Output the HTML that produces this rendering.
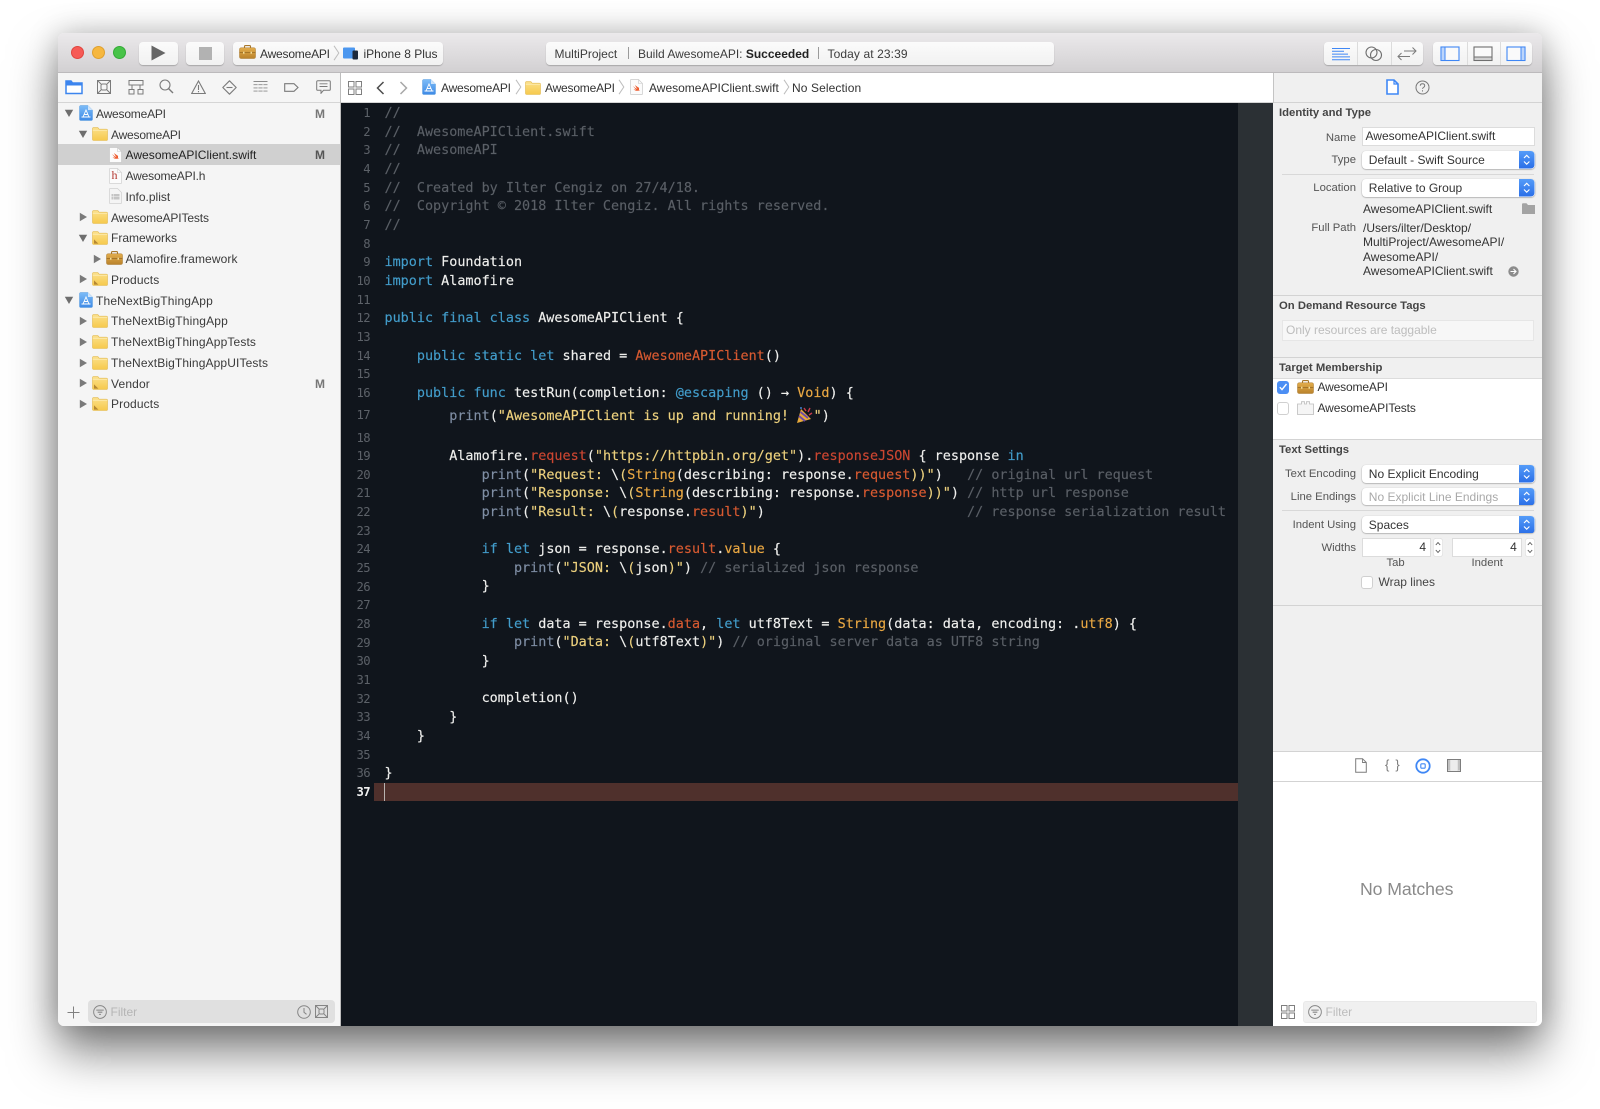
<!DOCTYPE html>
<html><head><meta charset="utf-8"><title>Xcode</title>
<style>
*{box-sizing:border-box;margin:0;padding:0}
html,body{width:1600px;height:1109px;overflow:hidden;background:#fff}
body{position:relative;font-family:"Liberation Sans",sans-serif;font-size:12px;color:#333}
.a{position:absolute}
.t{position:absolute;white-space:pre;line-height:16px;height:16px}
#shadow{position:absolute;left:58px;top:33px;width:1484px;height:993px;border-radius:6px;box-shadow:0 26px 48px rgba(0,0,0,.5),0 0 30px rgba(0,0,0,.22)}
#win{position:absolute;left:0;top:0;width:1600px;height:1109px;clip-path:inset(33px 58px 83px 58px round 6px);filter:blur(.3px)}
.btn{position:absolute;top:42px;height:23px;background:linear-gradient(#fbfbfb,#f1f1f1);border-radius:4px;box-shadow:0 1px 1px rgba(0,0,0,.22)}
.row{position:absolute;left:58px;width:282px;height:20.76px}
.row .tx{position:absolute;top:2.9px;line-height:16px;white-space:pre;color:#3a3a3a;font-size:12px}
.row svg{position:absolute}
.row .m{position:absolute;left:257px;top:2.9px;line-height:16px;font-weight:bold;color:#777;font-size:12px}
.hd{position:absolute;left:1279px;font-weight:bold;color:#444;font-size:11.3px;line-height:15px;white-space:pre}
.lab{position:absolute;right:244px;color:#555;font-size:11.3px;line-height:15px;white-space:pre}
.val{position:absolute;color:#333;font-size:12px;line-height:14px;white-space:pre}
.pop{position:absolute;left:1362px;width:172.5px;height:17.5px;background:#fff;border-radius:4px;box-shadow:0 .5px 1.5px rgba(0,0,0,.4);font-size:12px;line-height:18px;color:#333;padding-left:6.8px;white-space:pre}
.pop svg{position:absolute;right:0;top:0}
.fld{position:absolute;background:#fff;border:1px solid #dcdcdc;font-size:12px;line-height:17px;white-space:pre;color:#333}
.sep{position:absolute;left:1273px;width:269px;height:1px;background:#d3d3d3}
.dv{position:absolute;left:1282px;width:252px;height:1px;background:#d8d8d8}
#code{position:absolute;left:0;top:104.97px;width:1238px;font-family:"DejaVu Sans Mono","Liberation Mono",monospace;font-size:13.45px;color:#efefed;-webkit-text-stroke:.15px currentColor}
.l{position:relative;height:18.67px;line-height:18.67px;padding-left:384.5px;white-space:pre}
.l b{position:absolute;left:340px;width:30px;text-align:right;font-weight:normal;color:#5c6168;font-size:12.2px;font-family:"DejaVu Sans Mono",monospace;letter-spacing:-.6px;top:-.8px;-webkit-text-stroke:0}
.c{color:#5a5f66}.k{color:#429dcb}.s{color:#ecd07d}.p{color:#7f8ea4}.r{color:#cc4631}.o{color:#d85a31}.y{color:#eaa843}
</style></head><body>
<svg width="0" height="0" style="position:absolute">
<defs>
<linearGradient id="fg" x1="0" y1="0" x2="0" y2="1"><stop offset="0" stop-color="#fbe08a"/><stop offset="1" stop-color="#f6c94c"/></linearGradient>
<linearGradient id="tb" x1="0" y1="0" x2="0" y2="1"><stop offset="0" stop-color="#e3ad4b"/><stop offset="1" stop-color="#b9822b"/></linearGradient>
<linearGradient id="pj" x1="0" y1="0" x2="0" y2="1"><stop offset="0" stop-color="#7cbcf7"/><stop offset="1" stop-color="#3e8ae6"/></linearGradient>
<linearGradient id="bs" x1="0" y1="0" x2="0" y2="1"><stop offset="0" stop-color="#559cf8"/><stop offset="1" stop-color="#2b6fe7"/></linearGradient>
<symbol id="folder" viewBox="0 0 16 14"><path d="M.5 12.4V1.7C.5 1 1 .6 1.6.6h3.700c.5 0 .8.2 1.100.6l.7 1h7.300c.6 0 1.100.5 1.100 1.100v9.100c0 .6-.5 1.100-1.100 1.100H1.600c-.6 0-1.100-.5-1.100-1.100z" fill="url(#fg)" stroke="#e2b94f" stroke-width=".6"/><path d="M.8 3.2h14.400" stroke="#fdf0bd" stroke-width=".8"/></symbol>
<symbol id="folderm" viewBox="0 0 16 14"><use href="#folder" width="16" height="14"/><path d="M2 12.600V8.400l4.400 4.200z" fill="#b48733"/></symbol>
<symbol id="tool" viewBox="0 0 17 14"><path d="M5.500 3V1.500C5.500 1 6 .6 6.500.6h4c.5 0 1 .4 1 .9V3" fill="none" stroke="#a8772a" stroke-width="1.100"/><rect x=".5" y="2.800" width="16" height="10.700" rx="1.500" fill="url(#tb)" stroke="#a8772a" stroke-width=".5"/><path d="M.5 7.500h16" stroke="#9b6c22" stroke-width=".8"/><rect x="4" y="6.700" width="1.500" height="2" fill="#f3dd9a"/><rect x="11.500" y="6.700" width="1.500" height="2" fill="#f3dd9a"/></symbol>
<symbol id="proj" viewBox="0 0 14 16"><path d="M.5 1.500C.5 1 1 .5 1.500.5H9L13.500 5v9.500c0 .5-.5 1-1 1h-11c-.5 0-1-.5-1-1z" fill="url(#pj)" stroke="#5d9ee0" stroke-width=".5"/><path d="M9 .5V5h4.500z" fill="#cfe5fb"/><path d="M4 12 7 5l3 7M2.500 12h9M5 9.500h4" stroke="#fff" stroke-width=".9" fill="none"/></symbol>
<symbol id="swift" viewBox="0 0 13 16"><path d="M.5 1C.5.700.7.500 1 .5h7.500L12.500 4.500V15c0 .3-.2.5-.5.5H1c-.3 0-.5-.2-.5-.5z" fill="#fbfbfb" stroke="#c9c9c9" stroke-width=".7"/><path d="M8.500.5v4h4" fill="none" stroke="#c9c9c9" stroke-width=".6"/><path d="M3 7c1.500 1.500 3 2.500 4.500 3.200C6.300 8.700 5.500 7.300 5 6c1.300 1.200 3 2.300 4 2.800.1 1 0 1.500 0 2 .3.300.6.800.4 1.200-.5-.5-1-.5-1.700-.3-1.400.3-3-.1-4.200-1.400.9.400 2 .5 2.800.2C5 9.800 4 8.400 3 7z" fill="#ee5a2c"/></symbol>
<symbol id="hdoc" viewBox="0 0 13 16"><path d="M.5 1C.5.700.7.500 1 .5h7.500L12.500 4.500V15c0 .3-.2.5-.5.5H1c-.3 0-.5-.2-.5-.5z" fill="#fbfbfb" stroke="#cfcfcf" stroke-width=".7"/><path d="M8.500.5v4h4" fill="none" stroke="#cfcfcf" stroke-width=".6"/></symbol>
<symbol id="plist" viewBox="0 0 13 16"><path d="M.5 1C.5.700.7.500 1 .5h7.500L12.500 4.500V15c0 .3-.2.5-.5.5H1c-.3 0-.5-.2-.5-.5z" fill="#f4f4f4" stroke="#cfcfcf" stroke-width=".7"/><rect x="2.500" y="6" width="8" height="5.500" fill="#c4c4c4"/><path d="M4.500 6v5.500M2.500 8.700h8" stroke="#f4f4f4" stroke-width=".5"/></symbol>
<symbol id="updn" viewBox="0 0 16 17.500"><path d="M0 0h11.500C14 0 15.500 1.500 15.500 4v9.500c0 2.500-1.500 4-4 4H0z" fill="url(#bs)"/><path d="M5 7 7.700 4.300 10.400 7M5 10.500l2.700 2.700 2.700-2.700" fill="none" stroke="#fff" stroke-width="1.100"/></symbol>
<symbol id="tri-d" viewBox="0 0 10 10"><path d="M.8 1.800h8.400L5 9z" fill="#6e6e6e"/></symbol>
<symbol id="tri-r" viewBox="0 0 10 10"><path d="M1.800.8 9 5 1.800 9.200z" fill="#7a7a7a"/></symbol>
<symbol id="chev" viewBox="0 0 7 16"><path d="M1 .8 5.800 8 1 15.200" fill="none" stroke="#bdbdbd" stroke-width="1"/></symbol>
<symbol id="funnel" viewBox="0 0 15 15"><circle cx="7.500" cy="7.500" r="6.800" fill="none" stroke="#858585" stroke-width="1"/><path d="M3.500 5.500h8M5 7.700h5M6.500 10h2" stroke="#858585" stroke-width="1.100"/></symbol>
<symbol id="grid4" viewBox="0 0 14 14"><g fill="none" stroke="#7f7f7f" stroke-width="1"><rect x=".5" y=".5" width="5.500" height="5.500"/><rect x="8" y=".5" width="5.500" height="5.500"/><rect x=".5" y="8" width="5.500" height="5.500"/><rect x="8" y="8" width="5.500" height="5.500"/></g></symbol>
</defs></svg>

<div id="shadow"></div>
<div id="win">
<!-- base -->
<div class="a" style="left:58px;top:33px;width:1484px;height:993px;background:#f5f5f5"></div>
<!-- titlebar -->
<div class="a" style="left:58px;top:33px;width:1484px;height:40px;background:linear-gradient(#ebe9eb,#d2d0d2);border-bottom:1px solid #bcbabc"></div>
<div class="a" style="left:71px;top:46px;width:13px;height:13px;border-radius:50%;background:#f65a56;border:.5px solid #e0443e"></div>
<div class="a" style="left:91.500px;top:46px;width:13px;height:13px;border-radius:50%;background:#f6b73f;border:.5px solid #dfa02f"></div>
<div class="a" style="left:112.500px;top:46px;width:13px;height:13px;border-radius:50%;background:#48c348;border:.5px solid #34aa37"></div>
<div class="btn" style="left:139px;width:39px"></div>
<svg class="a" style="left:151px;top:45px" width="15" height="16"><path d="M.5 .5 14.500 8 .5 15.500z" fill="#666"/></svg>
<div class="btn" style="left:186px;width:38px"></div>
<div class="a" style="left:198.500px;top:47px;width:13px;height:13px;background:#b2b2b2"></div>
<div class="btn" style="left:233px;width:210px"></div>
<svg class="a" style="left:239px;top:45px" width="17" height="15"><use href="#tool" width="17" height="14"/></svg>
<div class="t" style="left:260px;top:45.500px;color:#333;letter-spacing:-.2px">AwesomeAPI</div>
<svg class="a" style="left:333px;top:45px" width="7" height="16"><use href="#chev" width="7" height="16"/></svg>
<svg class="a" style="left:343px;top:46px" width="16" height="14"><rect x="0" y="1.500" width="12" height="11" rx="1" fill="#4c97ef"/><rect x="9.500" y="4.500" width="5.500" height="9" rx="1" fill="#1e2a3c"/></svg>
<div class="t" style="left:363.500px;top:45.500px;color:#333">iPhone 8 Plus</div>
<div class="btn" style="left:546px;width:508px"></div>
<div class="t" style="left:554.500px;top:45.500px;color:#3c3c3c">MultiProject</div>
<div class="a" style="left:628px;top:47px;width:1px;height:12px;background:#9a9a9a"></div>
<div class="t" style="left:638px;top:45.500px;color:#3c3c3c">Build AwesomeAPI: <b style="color:#222">Succeeded</b></div>
<div class="a" style="left:817.500px;top:47px;width:1px;height:12px;background:#9a9a9a"></div>
<div class="t" style="left:827.500px;top:45.500px;color:#3c3c3c;letter-spacing:.1px">Today at 23:39</div>
<!-- right buttons -->
<div class="btn" style="left:1324px;width:99px"></div>
<div class="a" style="left:1357px;top:42px;width:1px;height:23px;background:#dcdcdc"></div>
<div class="a" style="left:1390.500px;top:42px;width:1px;height:23px;background:#dcdcdc"></div>
<svg class="a" style="left:1331px;top:46px" width="20" height="16"><path d="M1 2.500h18M1 5.300h12M1 8.100h16M1 10.900h18M1 13.700h18" stroke="#3f87f5" stroke-width="1"/></svg>
<svg class="a" style="left:1365px;top:46px" width="18" height="16"><circle cx="6.500" cy="6.500" r="5.500" fill="none" stroke="#6f6f6f" stroke-width="1.100"/><circle cx="11" cy="9" r="5.500" fill="none" stroke="#6f6f6f" stroke-width="1.100"/></svg>
<svg class="a" style="left:1397px;top:45.500px" width="20" height="16"><path d="M7 5h12M15.500 1.500 19 5l-3.500 3.500M13 10.500H1M4.500 7 1 10.500 4.500 14" fill="none" stroke="#7b7b7b" stroke-width="1"/></svg>
<div class="btn" style="left:1433px;width:99px"></div>
<div class="a" style="left:1466.500px;top:42px;width:1px;height:23px;background:#dcdcdc"></div>
<div class="a" style="left:1499.500px;top:42px;width:1px;height:23px;background:#dcdcdc"></div>
<svg class="a" style="left:1440px;top:46px" width="20" height="16"><rect x="1" y="1" width="18" height="13.500" fill="#fafafa" stroke="#3f87f5" stroke-width="1.100"/><rect x="1.500" y="1.500" width="3.500" height="12.500" fill="#bcd5fb"/><path d="M5 1v13.500" stroke="#3f87f5" stroke-width="1"/></svg>
<svg class="a" style="left:1473px;top:46px" width="20" height="16"><rect x="1" y="1" width="18" height="13.500" fill="#fafafa" stroke="#6f6f6f" stroke-width="1.100"/><rect x="1.500" y="11" width="17" height="3" fill="#d0d0d0"/><path d="M1 11h18" stroke="#6f6f6f" stroke-width="1"/></svg>
<svg class="a" style="left:1506px;top:46px" width="20" height="16"><rect x="1" y="1" width="18" height="13.500" fill="#fafafa" stroke="#3f87f5" stroke-width="1.100"/><rect x="15" y="1.500" width="3.500" height="12.500" fill="#bcd5fb"/><path d="M15 1v13.500" stroke="#3f87f5" stroke-width="1"/></svg>

<!-- nav bars -->
<div class="a" style="left:58px;top:73px;width:282px;height:30px;background:#f5f5f5;border-bottom:1px solid #d5d5d5"></div>
<div class="a" style="left:340px;top:73px;width:933px;height:30px;background:#fff;border-bottom:1px solid #d5d5d5"></div>
<div class="a" style="left:1273px;top:73px;width:269px;height:30px;background:#f0f0f0;border-bottom:1px solid #d3d3d3"></div>
<div class="a" style="left:340px;top:73px;width:1px;height:953px;background:#bdbdbd"></div>
<div class="a" style="left:1272.500px;top:73px;width:1px;height:953px;background:#c4c4c4"></div>
<svg class="a" style="left:65px;top:79px" width="18" height="16"><path d="M1 14.500V2h5l1.500 2H17v10.500z" fill="#fff" stroke="#3c85ee" stroke-width="1.500"/><path d="M1 2.500h5.500l1 2H17v2H1z" fill="#3c85ee"/></svg>
<svg class="a" style="left:97px;top:80px" width="14" height="14"><g fill="none" stroke="#7a7a7a" stroke-width="1"><rect x=".5" y=".5" width="13" height="13"/><rect x="4" y="4" width="6" height="6" rx="1.500"/><path d="M1 1l3 3M13 1l-3 3M1 13l3-3M13 13l-3-3"/></g></svg>
<svg class="a" style="left:128px;top:80px" width="16" height="15"><g fill="none" stroke="#7a7a7a" stroke-width="1"><rect x="1" y=".5" width="14" height="4.500"/><path d="M4 5v4M12 5v4"/><rect x="1" y="9.500" width="5" height="4.500"/><rect x="10" y="9.500" width="5" height="4.500"/></g></svg>
<svg class="a" style="left:159px;top:79px" width="15" height="15"><circle cx="6" cy="6" r="5" fill="none" stroke="#7a7a7a" stroke-width="1.100"/><path d="M9.600 9.600 14 14" stroke="#7a7a7a" stroke-width="1.400"/></svg>
<svg class="a" style="left:190.500px;top:80px" width="15" height="14"><path d="M7.500 1 14.300 13.500H.7z" fill="none" stroke="#7a7a7a" stroke-width="1.100"/><path d="M7.500 5v5M7.500 11v1.200" stroke="#7a7a7a" stroke-width="1.100"/></svg>
<svg class="a" style="left:222px;top:80px" width="15" height="15"><path d="M7.500 .8 14.200 7.500 7.500 14.200.8 7.500z" fill="none" stroke="#7a7a7a" stroke-width="1.100" stroke-linejoin="round"/><path d="M4.500 7.500h6" stroke="#7a7a7a" stroke-width="1.100"/></svg>
<svg class="a" style="left:253px;top:81px" width="15" height="12"><path d="M.5.500h14M.5 3.700h14M.5 6.900h14M.5 10.100h14" stroke="#8a8a8a" stroke-width=".9"/><path d="M5 3v8M10 3v8" stroke="#f5f5f5" stroke-width=".8"/></svg>
<svg class="a" style="left:284px;top:83px" width="15" height="9"><path d="M.7.700h9.300L14 4.500 10 8.300H.7z" fill="none" stroke="#7a7a7a" stroke-width="1.100"/></svg>
<svg class="a" style="left:315.500px;top:80px" width="15" height="14"><path d="M1.800.7h11.400c.6 0 1.100.5 1.100 1.100v7.400c0 .6-.5 1.100-1.100 1.100H7.500l-2.500 3v-3H1.800c-.6 0-1.100-.5-1.100-1.100V1.800C.7 1.200 1.200.7 1.800.7z" fill="none" stroke="#7a7a7a" stroke-width="1"/><path d="M3.500 3.800h8M3.500 6.500h8" stroke="#7a7a7a" stroke-width=".9"/></svg>
<svg class="a" style="left:348px;top:81px" width="14" height="14"><use href="#grid4" width="14" height="14"/></svg>
<svg class="a" style="left:376px;top:81px" width="9" height="14"><path d="M7.500 1 1.500 7l6 6" fill="none" stroke="#4c4c4c" stroke-width="1.500"/></svg>
<svg class="a" style="left:399px;top:81px" width="9" height="14"><path d="M1.500 1l6 6-6 6" fill="none" stroke="#a8a8a8" stroke-width="1.500"/></svg>
<svg class="a" style="left:421.500px;top:79px" width="14" height="16"><use href="#proj" width="14" height="16"/></svg>
<div class="t" style="left:441px;top:79.500px;color:#333;letter-spacing:-.2px">AwesomeAPI</div>
<svg class="a" style="left:515px;top:79px" width="7" height="16"><use href="#chev" width="7" height="16"/></svg>
<svg class="a" style="left:524.500px;top:81px" width="16" height="14"><use href="#folder" width="16" height="14"/></svg>
<div class="t" style="left:545px;top:79.500px;color:#333;letter-spacing:-.2px">AwesomeAPI</div>
<svg class="a" style="left:618px;top:79px" width="7" height="16"><use href="#chev" width="7" height="16"/></svg>
<svg class="a" style="left:629.500px;top:79px" width="13" height="16"><use href="#swift" width="13" height="16"/></svg>
<div class="t" style="left:649px;top:79.500px;color:#333">AwesomeAPIClient.swift</div>
<svg class="a" style="left:783px;top:79px" width="7" height="16"><use href="#chev" width="7" height="16"/></svg>
<div class="t" style="left:792px;top:79.500px;color:#333;letter-spacing:.1px">No Selection</div>
<!-- panel top icons -->
<svg class="a" style="left:1386px;top:79px" width="13" height="16"><path d="M1 1h7l4 4v10H1z" fill="#fff" stroke="#3f87f5" stroke-width="1.600"/><path d="M8 1v4h4" fill="none" stroke="#3f87f5" stroke-width="1.200"/></svg>
<svg class="a" style="left:1415px;top:80px" width="15" height="15"><circle cx="7.500" cy="7.500" r="6.500" fill="none" stroke="#777" stroke-width="1"/><path d="M5.300 5.800c0-1.300 1-2 2.200-2 1.300 0 2.200.8 2.200 1.900 0 1.700-2.200 1.600-2.200 3.200M7.500 10.200v1.300" fill="none" stroke="#777" stroke-width="1"/></svg>

<!-- sidebar rows -->
<div class="a" style="left:58px;top:144.420px;width:282px;height:20.760px;background:#d0d0d0"></div>
<div class="row" style="top:102.900px"><svg style="left:5.800px;top:5.500px" width="10" height="10"><use href="#tri-d" width="10" height="10"/></svg><svg style="left:21px;top:2px" width="14" height="16"><use href="#proj" width="14" height="16"/></svg><span class="tx" style="left:38px;letter-spacing:-.2px">AwesomeAPI</span><span class="m">M</span></div>
<div class="row" style="top:123.660px"><svg style="left:19.800px;top:5.500px" width="10" height="10"><use href="#tri-d" width="10" height="10"/></svg><svg style="left:34px;top:3.500px" width="16" height="14"><use href="#folder" width="16" height="14"/></svg><span class="tx" style="left:53px;letter-spacing:-.2px">AwesomeAPI</span></div>
<div class="row" style="top:144.420px"><svg style="left:50.500px;top:2.500px" width="13" height="16"><use href="#swift" width="13" height="16"/></svg><span class="tx" style="left:67.500px;color:#222;letter-spacing:.05px">AwesomeAPIClient.swift</span><span class="m" style="color:#555">M</span></div>
<div class="row" style="top:165.180px"><svg style="left:50.500px;top:2.500px" width="13" height="16"><use href="#hdoc" width="13" height="16"/></svg><span class="a" style="left:53.500px;top:3px;font-family:'Liberation Serif',serif;font-size:12px;color:#b3362f;line-height:15px">h</span><span class="tx" style="left:67.500px;letter-spacing:-.17px">AwesomeAPI.h</span></div>
<div class="row" style="top:185.940px"><svg style="left:50.500px;top:2.500px" width="13" height="16"><use href="#plist" width="13" height="16"/></svg><span class="tx" style="left:67.500px">Info.plist</span></div>
<div class="row" style="top:206.700px"><svg style="left:19.800px;top:5.500px" width="10" height="10"><use href="#tri-r" width="10" height="10"/></svg><svg style="left:34px;top:3.500px" width="16" height="14"><use href="#folder" width="16" height="14"/></svg><span class="tx" style="left:53px;letter-spacing:-.13px">AwesomeAPITests</span></div>
<div class="row" style="top:227.460px"><svg style="left:19.800px;top:5.500px" width="10" height="10"><use href="#tri-d" width="10" height="10"/></svg><svg style="left:34px;top:3.500px" width="16" height="14"><use href="#folderm" width="16" height="14"/></svg><span class="tx" style="left:53px">Frameworks</span></div>
<div class="row" style="top:248.220px"><svg style="left:34.300px;top:5.500px" width="10" height="10"><use href="#tri-r" width="10" height="10"/></svg><svg style="left:48px;top:3px" width="17" height="14"><use href="#tool" width="17" height="14"/></svg><span class="tx" style="left:67.500px;letter-spacing:.11px">Alamofire.framework</span></div>
<div class="row" style="top:268.980px"><svg style="left:19.800px;top:5.500px" width="10" height="10"><use href="#tri-r" width="10" height="10"/></svg><svg style="left:34px;top:3.500px" width="16" height="14"><use href="#folderm" width="16" height="14"/></svg><span class="tx" style="left:53px;letter-spacing:.12px">Products</span></div>
<div class="row" style="top:289.740px"><svg style="left:5.800px;top:5.500px" width="10" height="10"><use href="#tri-d" width="10" height="10"/></svg><svg style="left:21px;top:2px" width="14" height="16"><use href="#proj" width="14" height="16"/></svg><span class="tx" style="left:38px;letter-spacing:.16px">TheNextBigThingApp</span></div>
<div class="row" style="top:310.500px"><svg style="left:19.800px;top:5.500px" width="10" height="10"><use href="#tri-r" width="10" height="10"/></svg><svg style="left:34px;top:3.500px" width="16" height="14"><use href="#folder" width="16" height="14"/></svg><span class="tx" style="left:53px;letter-spacing:.16px">TheNextBigThingApp</span></div>
<div class="row" style="top:331.260px"><svg style="left:19.800px;top:5.500px" width="10" height="10"><use href="#tri-r" width="10" height="10"/></svg><svg style="left:34px;top:3.500px" width="16" height="14"><use href="#folder" width="16" height="14"/></svg><span class="tx" style="left:53px;letter-spacing:.13px">TheNextBigThingAppTests</span></div>
<div class="row" style="top:352.020px"><svg style="left:19.800px;top:5.500px" width="10" height="10"><use href="#tri-r" width="10" height="10"/></svg><svg style="left:34px;top:3.500px" width="16" height="14"><use href="#folder" width="16" height="14"/></svg><span class="tx" style="left:53px;letter-spacing:.12px">TheNextBigThingAppUITests</span></div>
<div class="row" style="top:372.780px"><svg style="left:19.800px;top:5.500px" width="10" height="10"><use href="#tri-r" width="10" height="10"/></svg><svg style="left:34px;top:3.500px" width="16" height="14"><use href="#folderm" width="16" height="14"/></svg><span class="tx" style="left:53px;letter-spacing:.15px">Vendor</span><span class="m">M</span></div>
<div class="row" style="top:393.540px"><svg style="left:19.800px;top:5.500px" width="10" height="10"><use href="#tri-r" width="10" height="10"/></svg><svg style="left:34px;top:3.500px" width="16" height="14"><use href="#folderm" width="16" height="14"/></svg><span class="tx" style="left:53px;letter-spacing:.12px">Products</span></div>
<!-- sidebar filter -->
<svg class="a" style="left:67px;top:1006px" width="13" height="13"><path d="M6.500 .5v12M.5 6.500h12" stroke="#808080" stroke-width="1"/></svg>
<div class="a" style="left:87.500px;top:1000px;width:247.500px;height:23px;background:#e0e0e0;border-radius:4px"></div>
<svg class="a" style="left:92.500px;top:1005px" width="14" height="14"><use href="#funnel" width="14" height="14"/></svg>
<div class="t" style="left:110.500px;top:1004px;color:#b5b5b5">Filter</div>
<svg class="a" style="left:297px;top:1005px" width="14" height="14"><circle cx="7" cy="7" r="6.300" fill="none" stroke="#858585" stroke-width="1"/><path d="M7 3v4.300l2.500 2" fill="none" stroke="#858585" stroke-width="1"/></svg>
<svg class="a" style="left:315px;top:1005px" width="13" height="13"><g fill="none" stroke="#858585" stroke-width="1"><rect x=".5" y=".5" width="12" height="12"/><rect x="4" y="4" width="5" height="5" rx="1.200"/><path d="M1 1l3 3M12 1 9 4M1 12l3-3M12 12 9 9"/></g></svg>

<!-- editor -->
<div class="a" style="left:341px;top:103px;width:897px;height:923px;background:#10151c"></div>
<div class="a" style="left:1238px;top:103px;width:35px;height:923px;background:#2b3034"></div>
<div class="a" style="left:374px;top:782.500px;width:864px;height:18.500px;background:#4f302c"></div>
<div class="a" style="left:384px;top:783px;width:1px;height:17.500px;background:#b9b3b0"></div>
<div id="code">
<div class="l c"><b>1</b>//</div>
<div class="l c"><b>2</b>//  AwesomeAPIClient.swift</div>
<div class="l c"><b>3</b>//  AwesomeAPI</div>
<div class="l c"><b>4</b>//</div>
<div class="l c"><b>5</b>//  Created by Ilter Cengiz on 27/4/18.</div>
<div class="l c"><b>6</b>//  Copyright © 2018 Ilter Cengiz. All rights reserved.</div>
<div class="l c"><b>7</b>//</div>
<div class="l"><b>8</b></div>
<div class="l"><b>9</b><span class="k">import</span> Foundation</div>
<div class="l"><b>10</b><span class="k">import</span> Alamofire</div>
<div class="l"><b>11</b></div>
<div class="l"><b>12</b><span class="k">public final class</span> AwesomeAPIClient {</div>
<div class="l"><b>13</b></div>
<div class="l"><b>14</b>    <span class="k">public static let</span> shared = <span class="o">AwesomeAPIClient</span>()</div>
<div class="l"><b>15</b></div>
<div class="l"><b>16</b>    <span class="k">public func</span> testRun(completion: <span class="k">@escaping</span> () → <span class="y">Void</span>) {</div>
<div class="l" style="height:26.070px;line-height:27.5px"><b style="top:-1.050px">17</b>        <span class="p">print</span>(<span class="s">"AwesomeAPIClient is up and running! </span><svg width="18" height="18" viewBox="0 0 18 18" style="vertical-align:-4px;margin:0 -.5px 0 -1px"><path d="M1 17 5 3l10 10z" fill="#e8a93a"/><path d="M3 10l6 5M4.500 6l7.500 6" stroke="#6d4aa8" stroke-width="1.800"/><path d="M8 2l2 3M14 2l-2 4M16 7l-3 2" stroke="#c63a4b" stroke-width="1.400"/><circle cx="5" cy="2" r="1" fill="#3f7fd0"/></svg><span class="s">"</span>)</div>
<div class="l"><b>18</b></div>
<div class="l" style="top:-.3px"><b>19</b>        Alamofire.<span class="r">request</span>(<span class="s">"https://httpbin.org/get"</span>).<span class="r">responseJSON</span> { response <span class="k">in</span></div>
<div class="l" style="top:-.3px"><b>20</b>            <span class="p">print</span>(<span class="s">"Request: </span>\<span class="s">(</span><span class="y">String</span>(describing: response.<span class="o">request</span><span class="s">))"</span>)   <span class="c">// original url request</span></div>
<div class="l" style="top:-.3px"><b>21</b>            <span class="p">print</span>(<span class="s">"Response: </span>\<span class="s">(</span><span class="y">String</span>(describing: response.<span class="o">response</span><span class="s">))"</span>) <span class="c">// http url response</span></div>
<div class="l" style="top:-.3px"><b>22</b>            <span class="p">print</span>(<span class="s">"Result: </span>\<span class="s">(</span>response.<span class="o">result</span><span class="s">)"</span>)                         <span class="c">// response serialization result</span></div>
<div class="l" style="top:-.3px"><b>23</b></div>
<div class="l" style="top:-.3px"><b>24</b>            <span class="k">if let</span> json = response.<span class="o">result</span>.<span class="y">value</span> {</div>
<div class="l" style="top:-.3px"><b>25</b>                <span class="p">print</span>(<span class="s">"JSON: </span>\<span class="s">(</span>json<span class="s">)"</span>) <span class="c">// serialized json response</span></div>
<div class="l" style="top:-.3px"><b>26</b>            }</div>
<div class="l" style="top:-.3px"><b>27</b></div>
<div class="l" style="top:-.3px"><b>28</b>            <span class="k">if let</span> data = response.<span class="o">data</span>, <span class="k">let</span> utf8Text = <span class="y">String</span>(data: data, encoding: .<span class="y">utf8</span>) {</div>
<div class="l" style="top:-.3px"><b>29</b>                <span class="p">print</span>(<span class="s">"Data: </span>\<span class="s">(</span>utf8Text<span class="s">)"</span>) <span class="c">// original server data as UTF8 string</span></div>
<div class="l" style="top:-.3px"><b>30</b>            }</div>
<div class="l" style="top:-.3px"><b>31</b></div>
<div class="l" style="top:-.3px"><b>32</b>            completion()</div>
<div class="l" style="top:-.3px"><b>33</b>        }</div>
<div class="l" style="top:-.3px"><b>34</b>    }</div>
<div class="l" style="top:-.3px"><b>35</b></div>
<div class="l" style="top:-.3px"><b>36</b>}</div>
<div class="l" style="top:-.3px"><b style="color:#f0f0f0;font-weight:bold">37</b></div>
</div>

<!-- inspector -->
<div class="a" style="left:1273px;top:103px;width:269px;height:648px;background:#f0f0f0"></div>
<div class="hd" style="top:106px">Identity and Type</div>
<div class="lab" style="top:130.500px">Name</div>
<div class="fld" style="left:1361.500px;top:127.300px;width:173px;height:18.500px;padding-left:3px">AwesomeAPIClient.swift</div>
<div class="lab" style="top:153px">Type</div>
<div class="pop" style="top:151px">Default - Swift Source<svg width="16" height="17.500"><use href="#updn" width="16" height="17.500"/></svg></div>
<div class="dv" style="top:173.500px"></div>
<div class="lab" style="top:181px">Location</div>
<div class="pop" style="top:179.300px">Relative to Group<svg width="16" height="17.500"><use href="#updn" width="16" height="17.500"/></svg></div>
<div class="val" style="left:1363px;top:202px;letter-spacing:-.03px">AwesomeAPIClient.swift</div>
<svg class="a" style="left:1522px;top:203px" width="13" height="11"><path d="M0 1.500C0 .700.500.300 1 .300h3.500L6 2h7v9H0z" fill="#a3a3a3"/></svg>
<div class="lab" style="top:221px">Full Path</div>
<div class="val" style="left:1363px;top:220.500px">/Users/ilter/Desktop/</div>
<div class="val" style="left:1363px;top:235px">MultiProject/AwesomeAPI/</div>
<div class="val" style="left:1363px;top:249.500px">AwesomeAPI/</div>
<div class="val" style="left:1363px;top:264px">AwesomeAPIClient.swift</div>
<svg class="a" style="left:1508px;top:266px" width="11" height="11"><circle cx="5.500" cy="5.500" r="5.200" fill="#8c8c8c"/><path d="M2.500 5.500h5M5.500 3l2.500 2.500L5.500 8" fill="none" stroke="#fff" stroke-width="1.100"/></svg>
<div class="sep" style="top:295px"></div>
<div class="hd" style="top:298.500px">On Demand Resource Tags</div>
<div class="fld" style="left:1282px;top:320px;width:252px;height:21px;padding-left:3px;line-height:19px;color:#bdbdbd;border-color:#e6e6e6;background:#f7f7f7">Only resources are taggable</div>
<div class="sep" style="top:357px"></div>
<div class="hd" style="top:360.500px">Target Membership</div>
<div class="a" style="left:1273px;top:377.500px;width:269px;height:62px;background:#fff;border-top:1px solid #dcdcdc"></div>
<div class="a" style="left:1276.500px;top:381px;width:12.500px;height:12.500px;border-radius:3px;background:#4c8ff4"></div>
<svg class="a" style="left:1277px;top:381px" width="12" height="12"><path d="M2.800 6.200 5 8.600 9.500 3" fill="none" stroke="#fff" stroke-width="1.400"/></svg>
<svg class="a" style="left:1297px;top:380px" width="17" height="14"><use href="#tool" width="17" height="14"/></svg>
<div class="val" style="left:1317.500px;top:380px;letter-spacing:-.15px">AwesomeAPI</div>
<div class="a" style="left:1276.500px;top:402px;width:12.500px;height:12.500px;border-radius:3px;background:#fff;border:1px solid #d0d0d0"></div>
<svg class="a" style="left:1297px;top:401px" width="17" height="14"><path d="M.5 3h4V.7h3V3h2V.7h3V3h4v10.500H.5z" fill="#f5f5f5" stroke="#bdbdbd" stroke-width=".8"/></svg>
<div class="val" style="left:1317.500px;top:400.500px;letter-spacing:-.1px">AwesomeAPITests</div>
<div class="sep" style="top:439px"></div>
<div class="hd" style="top:442.500px">Text Settings</div>
<div class="lab" style="top:466.500px">Text Encoding</div>
<div class="pop" style="top:465px">No Explicit Encoding<svg width="16" height="17.500"><use href="#updn" width="16" height="17.500"/></svg></div>
<div class="lab" style="top:489.500px">Line Endings</div>
<div class="pop" style="top:487.700px;color:#a9a9a9">No Explicit Line Endings<svg width="16" height="17.500"><use href="#updn" width="16" height="17.500"/></svg></div>
<div class="dv" style="top:510px"></div>
<div class="lab" style="top:517.500px">Indent Using</div>
<div class="pop" style="top:515.700px">Spaces<svg width="16" height="17.500"><use href="#updn" width="16" height="17.500"/></svg></div>
<div class="lab" style="top:541px">Widths</div>
<div class="fld" style="left:1361.500px;top:538.300px;width:69.500px;height:18.500px;text-align:right;padding-right:4px">4</div>
<svg class="a" style="left:1433px;top:538px" width="10" height="19"><rect x=".3" y=".3" width="9.400" height="18.400" rx="3" fill="#fff" stroke="#d8d8d8" stroke-width=".6"/><path d="M2.800 7 5 4.500 7.200 7M2.800 12 5 14.500 7.200 12" fill="none" stroke="#555" stroke-width=".9"/></svg>
<div class="fld" style="left:1452.300px;top:538.300px;width:69.500px;height:18.500px;text-align:right;padding-right:4px">4</div>
<svg class="a" style="left:1524.500px;top:538px" width="10" height="19"><rect x=".3" y=".3" width="9.400" height="18.400" rx="3" fill="#fff" stroke="#d8d8d8" stroke-width=".6"/><path d="M2.800 7 5 4.500 7.200 7M2.800 12 5 14.500 7.200 12" fill="none" stroke="#555" stroke-width=".9"/></svg>
<div class="val" style="left:1386.500px;top:556px;color:#555;font-size:11.300px">Tab</div>
<div class="val" style="left:1471.500px;top:556px;color:#555;font-size:11.300px">Indent</div>
<div class="a" style="left:1360.700px;top:576px;width:12.500px;height:12.500px;border-radius:3px;background:#fff;border:1px solid #d0d0d0"></div>
<div class="val" style="left:1378.500px;top:575px;color:#444">Wrap lines</div>
<div class="sep" style="top:605px"></div>

<!-- library -->
<div class="a" style="left:1273px;top:751px;width:269px;height:275px;background:#fff"></div>
<div class="sep" style="top:750.500px"></div>
<div class="sep" style="top:780.500px"></div>
<svg class="a" style="left:1355px;top:758px" width="12" height="15"><path d="M.7.700h6.800l3.800 3.800v9.800H.7z" fill="#fff" stroke="#7d7d7d" stroke-width="1"/><path d="M7.500.700v3.800h3.800" fill="none" stroke="#7d7d7d" stroke-width=".9"/></svg>
<div class="t" style="left:1385px;top:757px;font-size:13px;color:#7a7a7a;letter-spacing:1.200px">{ }</div>
<svg class="a" style="left:1414.500px;top:757.500px" width="16" height="16"><circle cx="8" cy="8" r="6.700" fill="none" stroke="#3f87f5" stroke-width="1.800"/><rect x="5.800" y="5.800" width="4.400" height="4.400" rx="1" fill="none" stroke="#3f87f5" stroke-width="1.100"/></svg>
<svg class="a" style="left:1447px;top:759px" width="14" height="13"><rect x=".5" y=".5" width="13" height="12" fill="#d6d6d6" stroke="#7d7d7d" stroke-width="1"/><rect x="3.500" y="1" width="7" height="11" fill="#ededed"/><path d="M2 1.500v10M12 1.500v10" stroke="#7d7d7d" stroke-width="1" stroke-dasharray="1 1"/></svg>
<div class="t" style="left:1360px;top:879px;height:20px;line-height:20px;font-size:17.700px;color:#8a8a8a;letter-spacing:-.1px">No Matches</div>
<svg class="a" style="left:1281px;top:1005px" width="14" height="14"><use href="#grid4" width="14" height="14"/></svg>
<div class="a" style="left:1302.500px;top:1000.500px;width:234px;height:22.500px;background:#f0f0f0;border-radius:3px;border:1px solid #e9e9e9"></div>
<svg class="a" style="left:1307.500px;top:1005px" width="14" height="14"><use href="#funnel" width="14" height="14"/></svg>
<div class="t" style="left:1325.500px;top:1004px;color:#bcbcbc">Filter</div>
</div>
</body></html>
